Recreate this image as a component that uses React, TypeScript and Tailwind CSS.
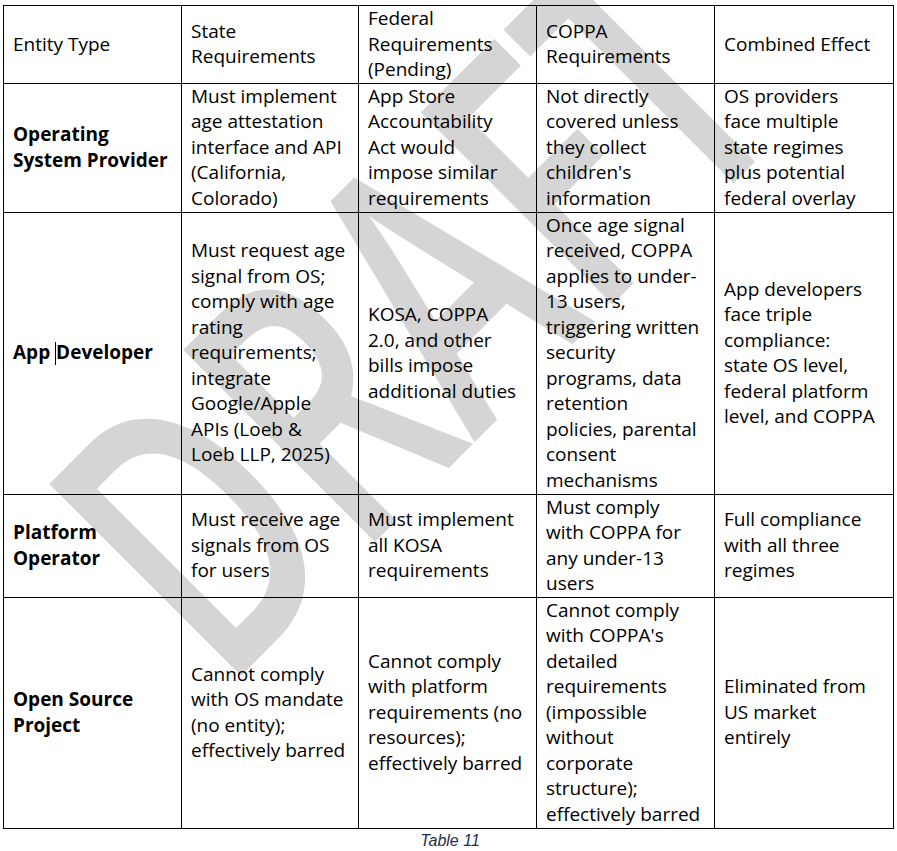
import React from "react";

type Row = {
  entity: string[];
  cells: string[][];
  height: string;
};

const header = [
  ["Entity Type"],
  ["State", "Requirements"],
  ["Federal", "Requirements", "(Pending)"],
  ["COPPA", "Requirements"],
  ["Combined Effect"],
];

const rows: Row[] = [
  {
    entity: ["Operating", "System Provider"],
    height: "h-[129px]",
    cells: [
      ["Must implement", "age attestation", "interface and API", "(California,", "Colorado)"],
      ["App Store", "Accountability", "Act would", "impose similar", "requirements"],
      ["Not directly", "covered unless", "they collect", "children's", "information"],
      ["OS providers", "face multiple", "state regimes", "plus potential", "federal overlay"],
    ],
  },
  {
    entity: ["App Developer"],
    height: "h-[282px]",
    cells: [
      [
        "Must request age",
        "signal from OS;",
        "comply with age",
        "rating",
        "requirements;",
        "integrate",
        "Google/Apple",
        "APIs (Loeb &",
        "Loeb LLP, 2025)",
      ],
      ["KOSA, COPPA", "2.0, and other", "bills impose", "additional duties"],
      [
        "Once age signal",
        "received, COPPA",
        "applies to under-",
        "13 users,",
        "triggering written",
        "security",
        "programs, data",
        "retention",
        "policies, parental",
        "consent",
        "mechanisms",
      ],
      ["App developers", "face triple", "compliance:", "state OS level,", "federal platform", "level, and COPPA"],
    ],
  },
  {
    entity: ["Platform", "Operator"],
    height: "h-[103px]",
    cells: [
      ["Must receive age", "signals from OS", "for users"],
      ["Must implement", "all KOSA", "requirements"],
      ["Must comply", "with COPPA for", "any under-13", "users"],
      ["Full compliance", "with all three", "regimes"],
    ],
  },
  {
    entity: ["Open Source", "Project"],
    height: "h-[231px]",
    cells: [
      ["Cannot comply", "with OS mandate", "(no entity);", "effectively barred"],
      ["Cannot comply", "with platform", "requirements (no", "resources);", "effectively barred"],
      [
        "Cannot comply",
        "with COPPA's",
        "detailed",
        "requirements",
        "(impossible",
        "without",
        "corporate",
        "structure);",
        "effectively barred",
      ],
      ["Eliminated from", "US market", "entirely"],
    ],
  },
];

function Lines({ lines }: { lines: string[] }) {
  return (
    <>
      {lines.map((line, i) => (
        <div key={i} className="whitespace-nowrap">
          {line}
        </div>
      ))}
    </>
  );
}

const cellClass = "border border-black pl-[9px] pr-1 py-0 align-middle text-left font-normal";

export default function App() {
  return (
    <div className="relative w-[897px] h-[851px] overflow-hidden bg-white font-['Open_Sans',sans-serif] text-[19px] leading-[25.5px] text-black">
      {/* watermark */}
      <div className="pointer-events-none absolute inset-0 overflow-hidden">
        <span className="absolute left-[406px] top-[303px] whitespace-nowrap font-['Open_Sans',sans-serif] text-[380px] font-semibold leading-none text-[#d5d5d5] [transform:translate(-50%,-50%)_rotate(-45deg)_scaleX(0.68)]">
          DRAFT
        </span>
      </div>

      <div className="relative pl-[3px] pt-[5px]">
        <table className="table-fixed border-collapse w-[890px]">
          <colgroup>
            <col className="w-[178px]" />
            <col className="w-[177px]" />
            <col className="w-[178px]" />
            <col className="w-[178px]" />
            <col className="w-[179px]" />
          </colgroup>
          <thead>
            <tr className="h-[77px]">
              {header.map((h, i) => (
                <th key={i} className={cellClass}>
                  <Lines lines={h} />
                </th>
              ))}
            </tr>
          </thead>
          <tbody>
            {rows.map((row, r) => (
              <tr key={r} className={row.height}>
                <td className={cellClass + " font-bold"}>
                  {row.entity[0] === "App Developer" ? (
                    <div className="whitespace-nowrap font-bold">
                      App{" "}
                      <span className="inline-block w-0 h-[23px] border-l border-black align-[-6px]" />
                      Developer
                    </div>
                  ) : (
                    <div className="font-bold">
                      <Lines lines={row.entity} />
                    </div>
                  )}
                </td>
                {row.cells.map((c, i) => (
                  <td key={i} className={cellClass}>
                    <Lines lines={c} />
                  </td>
                ))}
              </tr>
            ))}
          </tbody>
        </table>
        <div className="mt-[3px] text-center font-['Liberation_Sans',sans-serif] text-[16px] leading-[18px] italic text-[#1f2d4d]">
          Table 11
        </div>
      </div>
    </div>
  );
}
